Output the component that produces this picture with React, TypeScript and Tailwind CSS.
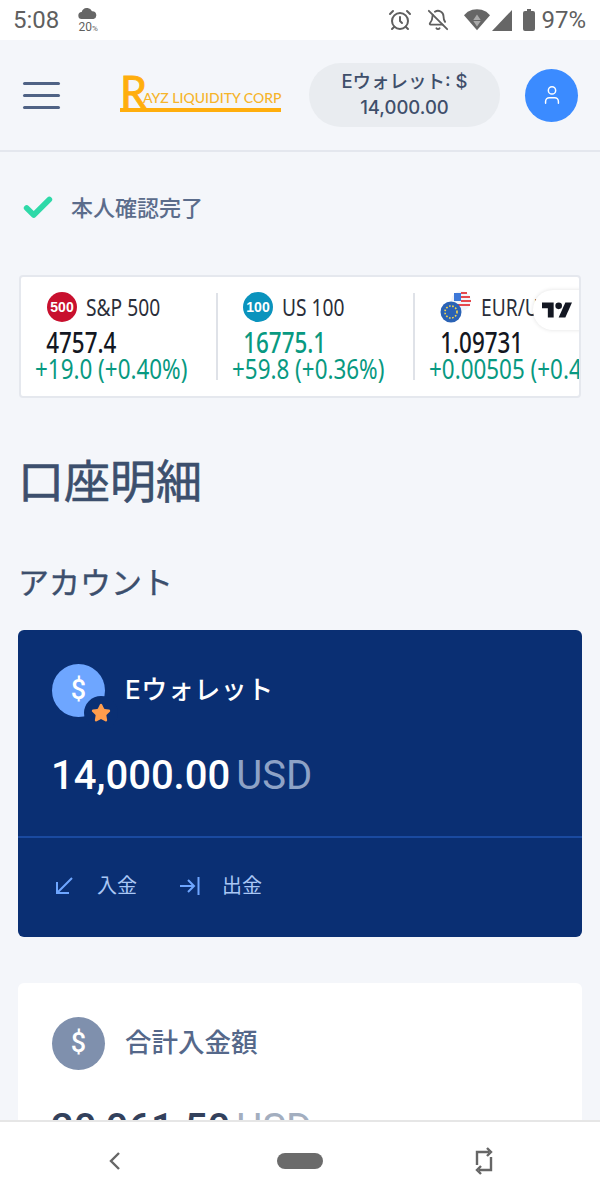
import { AlarmClock, BellOff, Check, Star, User } from "lucide-react";

const jp = "font-['Inter','Noto_Sans_CJK_JP',sans-serif]";

const tickers = [
  { name: "S&P 500", price: "4757.4", change: "+19.0 (+0.40%)", up: false, badge: "500", color: "bg-[#c8102e]" },
  { name: "US 100", price: "16775.1", change: "+59.8 (+0.36%)", up: true, badge: "100", color: "bg-[#0a93bd]" },
  { name: "EUR/USD", price: "1.09731", change: "+0.00505 (+0.46%)", up: false, badge: "", color: "" },
];

const FlagPair = () => (
  <svg width="32" height="32" viewBox="0 0 32 32" className="shrink-0">
    <circle cx="21" cy="10" r="10" fill="#f2f4f8" />
    <path d="M14 2h7v8h-7z" fill="#3d78d8" />
    <path d="M21 2h6M21 6h9M21 10h10M15 14h15" stroke="#e5484d" strokeWidth="2.2" />
    <circle cx="11" cy="21" r="10.500" fill="#2a62b5" />
    <circle cx="11" cy="21" r="6" fill="none" stroke="#f7d64a" strokeWidth="1.6" strokeDasharray="1.6 1.6" />
  </svg>
);

const TvLogo = () => (
  <svg width="30" height="16" viewBox="0 0 36 18" fill="#131722">
    <path d="M14 18H7V7H0V0h14v18z" />
    <circle cx="20" cy="4" r="4" />
    <path d="M28 0h8l-8 18h-8l8-18z" />
  </svg>
);

const Dollar = ({ className }: { className: string }) => (
  <div className={`flex h-[53px] w-[53px] items-center justify-center rounded-full font-['Roboto',sans-serif] text-[27px] font-medium ${className}`}>
    $
  </div>
);

export default function App() {
  return (
    <div className={`flex h-[1200px] w-[600px] flex-col overflow-hidden bg-[#f4f6fa] ${jp}`}>
      {/* android status bar */}
      <div className="flex h-10 shrink-0 items-center justify-between bg-white pl-[13px] pr-[14px] font-['Roboto',sans-serif] text-[#5f5f5f]">
        <div className="flex items-center gap-[19px]">
          <span className="text-[24px]">5:08</span>
          <div className="flex flex-col items-center leading-none">
            <svg width="20" height="11" viewBox="0 0 20 11" fill="#666">
              <path d="M4 11a3.5 3.5 0 0 1-.3-7A5.5 5.5 0 0 1 14 3.2 4 4 0 0 1 15.500 11z" />
            </svg>
            <span className="mt-[2px] text-[12px] leading-none">
              20<span className="text-[8px]">%</span>
            </span>
          </div>
        </div>
        <div className="flex items-center">
          <AlarmClock size={24} strokeWidth={2} className="mr-[15px]" />
          <BellOff size={22} strokeWidth={2} className="mr-[15px]" />
          <svg width="26" height="24" viewBox="7 0 28 24" className="mr-[2px]">
            <path d="M11 3q10-5 20 0l4 4L21 23 7 7z" fill="#666" />
            <path d="M21 6l4 6h-8zM17 13h8l-4 6z" fill="#aaa" />
          </svg>
          <svg width="20" height="22" viewBox="0 0 20 22" fill="#666" className="mr-[11px]">
            <path d="M20 1v21H0z" />
          </svg>
          <svg width="12" height="22" viewBox="0 0 12 22" fill="#666" className="mr-[6px]">
            <path d="M4 0h4v2h2a2 2 0 0 1 2 2v16a2 2 0 0 1-2 2H2a2 2 0 0 1-2-2V4a2 2 0 0 1 2-2h2z" />
          </svg>
          <span className="text-[24px]">97%</span>
        </div>
      </div>

      {/* header */}
      <div className="flex h-28 shrink-0 items-center border-b-2 border-[#e4e7ee] pl-[23px] pr-[22px]">
        <div className="flex w-[37px] flex-col gap-[9px]">
          <div className="h-[3px] rounded-full bg-[#4f6285]" />
          <div className="h-[3px] rounded-full bg-[#4f6285]" />
          <div className="h-[3px] rounded-full bg-[#4f6285]" />
        </div>
        <div className="mb-[3px] ml-[60px] flex w-[161px] flex-col">
          <div className="flex h-[33px] items-end">
            <span className="w-[23px] origin-left scale-x-[0.92] font-['Lato',sans-serif] text-[47px] leading-[33px] text-[#ffae0d] [-webkit-text-stroke:1px_#ffae0d]">R</span>
            <span className="whitespace-nowrap font-['Lato',sans-serif] text-[14px] font-medium leading-[20px] text-[#f6b42a]">AYZ LIQUIDITY CORP</span>
          </div>
          <div className="h-[4px] bg-[#ffae0d]" />
        </div>
        <div className="ml-[28px] flex h-16 w-[191px] flex-col items-center justify-center rounded-full bg-[#e9ecf0] pb-[2px] text-[18.500px] font-medium leading-[26px] text-[#3f4f6b]">
          <span>Eウォレット: $</span>
          <span>14,000.00</span>
        </div>
        <div className="ml-auto flex h-[53px] w-[53px] items-center justify-center rounded-full bg-[#3b8bff]">
          <User size={22} strokeWidth={1.6} color="#fff" />
        </div>
      </div>

      <div className="flex min-h-0 flex-1 flex-col overflow-hidden px-[18px]">
        {/* kyc status */}
        <div className="mt-[39px] flex h-9 items-center gap-[17px] pl-[4px]">
          <Check size={34} strokeWidth={4} color="#2ed9a8" className="-mx-[1px]" />
          <span className="text-[22px] font-medium text-[#5b6c8b]">本人確認完了</span>
        </div>

        {/* tradingview ticker */}
        <div className="relative mx-[1px] mt-[50px] flex h-[123px] shrink-0 overflow-hidden rounded border-2 border-[#e5e8ee] bg-white font-['Noto_Sans',sans-serif] text-[#131722]">
          {tickers.map((t, i) => (
            <div key={t.name} className="flex h-[87px] w-[197px] shrink-0 self-center border-r-2 border-[#dfe2e8] pl-[14px] last:border-r-0">
              <div className="flex flex-col whitespace-nowrap">
                <div className={`flex h-7 items-center gap-[9px] ${i === 0 ? "pl-[12px]" : "pl-[11px]"}`}>
                  {t.badge ? (
                    <div className={`flex h-[30px] w-[30px] items-center justify-center rounded-full font-['Liberation_Sans',sans-serif] text-[14px] font-bold text-white ${t.color}`}>
                      {t.badge}
                    </div>
                  ) : (
                    <FlagPair />
                  )}
                  <span className="origin-left scale-x-[0.8] text-[24px] text-[#2a2e39]">{t.name}</span>
                </div>
                <div className={`mt-[3px] origin-left scale-x-[0.8] pl-[14px] text-[28px] font-medium leading-[36px] ${t.up ? "text-[#089981]" : ""}`}>{t.price}</div>
                <div className="origin-left scale-x-[0.83] text-[27px] leading-[18px] text-[#089981]">{t.change}</div>
              </div>
            </div>
          ))}
          <div className="absolute -right-6 top-[13px] flex h-10 w-[70px] items-center rounded-full bg-white pl-[9px] shadow-[0_0_4px_rgba(0,0,0,0.12)]">
            <TvLogo />
          </div>
        </div>

        <h1 className="mt-[51px] text-[46px] font-normal leading-[64px] text-[#3c4f6d] [-webkit-text-stroke:0.6px_#3c4f6d]">口座明細</h1>
        <h2 className="mt-[49px] text-[31px] font-normal leading-[42px] text-[#3c4f6d] [-webkit-text-stroke:0.4px_#3c4f6d]">アカウント</h2>

        {/* e-wallet card */}
        <div className="mt-[26px] flex h-[307px] shrink-0 flex-col rounded-md bg-[#0a2f73]">
          <div className="flex-1 px-[34px] pt-[34px]">
            <div className="flex items-center gap-5">
              <div className="relative">
                <Dollar className="bg-[#6ea6ff] text-white" />
                <div className="absolute -bottom-[13px] -right-[13px] flex h-[34px] w-[34px] items-center justify-center rounded-full bg-[#0a2f73]">
                  <Star size={20} fill="#ff9d4d" color="#ff9d4d" />
                </div>
              </div>
              <span className="pb-[3px] text-[26px] font-medium tracking-[0.5px] text-white">Eウォレット</span>
            </div>
            <div className="mt-[36px] -ml-[1px] flex items-baseline gap-[6px] font-['Roboto',sans-serif] text-[40px] leading-[46px]">
              <span className="font-medium text-white">14,000.00</span>
              <span className="text-[#8ea2c6]">USD</span>
            </div>
          </div>
          <div className="flex h-[101px] items-center gap-[42px] border-t-2 border-[#1a4aa0] pb-[3px] pl-[36px] text-[20px] text-[#a9c7f5]">
            <div className="flex items-center gap-[23px]">
              <svg width="20" height="20" viewBox="0 0 20 20" fill="none" stroke="#6ea6ff" strokeWidth="2">
                <path d="M18 2 3 17M3 6v11h12" />
              </svg>
              <span>入金</span>
            </div>
            <div className="flex items-center gap-[22px]">
              <svg width="21" height="20" viewBox="0 0 21 20" fill="none" stroke="#6ea6ff" strokeWidth="2">
                <path d="M1 10h14M9 4l6 6-6 6M19.500 1v18" />
              </svg>
              <span>出金</span>
            </div>
          </div>
        </div>

        {/* total deposit card */}
        <div className="mt-[46px] shrink-0 rounded-md bg-white px-[34px] pt-[34px]">
          <div className="flex items-center gap-5">
            <Dollar className="bg-[#7f90ad] text-white" />
            <span className="pb-[2px] text-[26.500px] font-medium text-[#55688a]">合計入金額</span>
          </div>
          <div className="mt-[36px] -ml-[1px] flex items-baseline gap-[6px] font-['Roboto',sans-serif] text-[40px] leading-[46px]">
            <span className="font-medium text-[#33415c]">20,061.50</span>
            <span className="text-[#a3aebf]">USD</span>
          </div>
        </div>
      </div>

      {/* android nav bar */}
      <div className="relative z-10 flex h-20 shrink-0 items-center border-t-2 border-[#e6e6e6] bg-white">
        <svg width="14" height="20" viewBox="0 0 14 20" fill="none" stroke="#666" strokeWidth="2.400" className="ml-[108px]">
          <path d="M11 2 3 10l8 8" />
        </svg>
        <div className="ml-[155px] h-4 w-[46px] rounded-full bg-[#6b6b6b]" />
        <svg width="20" height="30" viewBox="0 0 20 30" fill="none" stroke="#666" strokeWidth="2.400" className="ml-[151px]">
          <path d="M3 19V6h12M13 2l4 4-4 4" />
          <path d="M17 11v13H5M7 20l-4 4 4 4" />
        </svg>
      </div>
    </div>
  );
}
